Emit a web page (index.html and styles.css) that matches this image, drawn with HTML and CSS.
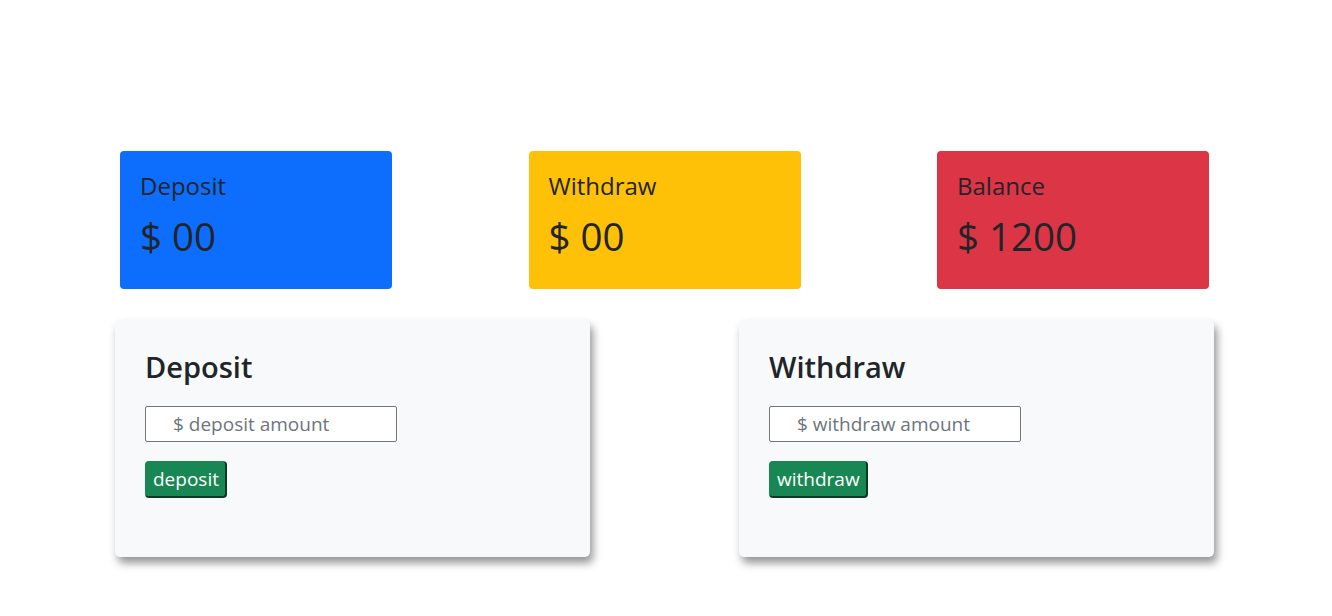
FILE: index.html
```html
<!DOCTYPE html>
<html lang="en">
<head>
<meta charset="utf-8">
<title>Bank</title>
<link rel="stylesheet" href="styles.css">
</head>
<body>
  <main class="page">
    <section class="stats">
      <div class="stat stat-blue">
        <h4 class="stat-label">Deposit</h4>
        <h1 class="stat-value">$ 00</h1>
      </div>
      <div class="stat stat-yellow">
        <h4 class="stat-label">Withdraw</h4>
        <h1 class="stat-value">$ 00</h1>
      </div>
      <div class="stat stat-red">
        <h4 class="stat-label">Balance</h4>
        <h1 class="stat-value">$ 1200</h1>
      </div>
    </section>
    <section class="panels">
      <div class="panel">
        <h2 class="panel-title">Deposit</h2>
        <input class="amount" type="text" placeholder="$ deposit amount">
        <div><button class="btn-green">deposit</button></div>
      </div>
      <div class="panel">
        <h2 class="panel-title">Withdraw</h2>
        <input class="amount" type="text" placeholder="$ withdraw amount">
        <div><button class="btn-green">withdraw</button></div>
      </div>
    </section>
  </main>
</body>
</html>
```

FILE: styles.css
```css
* { box-sizing: border-box; }
html, body { margin: 0; padding: 0; background: #fff; }
body {
  font-family: "Open Sans", "Noto Sans", sans-serif;
  color: #212529;
}
.page { padding-top: 151px; padding-bottom: 59px; }

.stats {
  display: flex;
  gap: 136.5px;
  padding-left: 120px;
}
.stat {
  width: 272px;
  padding: 21px 20px 20px;
  border-radius: 4px;
}
.stat-blue { background: #0d6efd; }
.stat-yellow { background: #ffc107; }
.stat-red { background: #dc3545; }
.stat-label {
  margin: 0 0 12px;
  font-size: 24px;
  font-weight: 500;
  line-height: 1.2;
}
.stat-value {
  margin: 0 0 10px;
  font-size: 38.5px;
  font-weight: 500;
  line-height: 1.2;
}

.panels {
  display: flex;
  gap: 149px;
  padding-left: 115px;
  margin-top: 31px;
}
.panel {
  width: 475px;
  height: 237px;
  padding: 30px 30px;
  background: #f8f9fa;
  border-radius: 5px;
  box-shadow: 3px 6px 9px rgba(0,0,0,0.42);
}
.panel-title {
  margin: 0 0 20.8px;
  font-size: 29px;
  font-weight: 600;
  line-height: 1.2;
}
.amount {
  display: block;
  width: 252px;
  height: 36px;
  padding: 0 0 0 27px;
  border: 1px solid #767676;
  border-radius: 2px;
  background: #fff;
  font-family: inherit;
  font-size: 19px;
  color: #212529;
  margin-bottom: 19px;
}
.amount::placeholder { color: #6c757d; }
.btn-green {
  height: 37px;
  padding: 0 6px 0 7px;
  background: #198754;
  color: #fff;
  font-family: inherit;
  font-size: 19px;
  border-style: solid;
  border-width: 1px 2px 2px 1px;
  border-color: #198754 #0b3a22 #0b3a22 #198754;
  border-radius: 4px;
}
```
